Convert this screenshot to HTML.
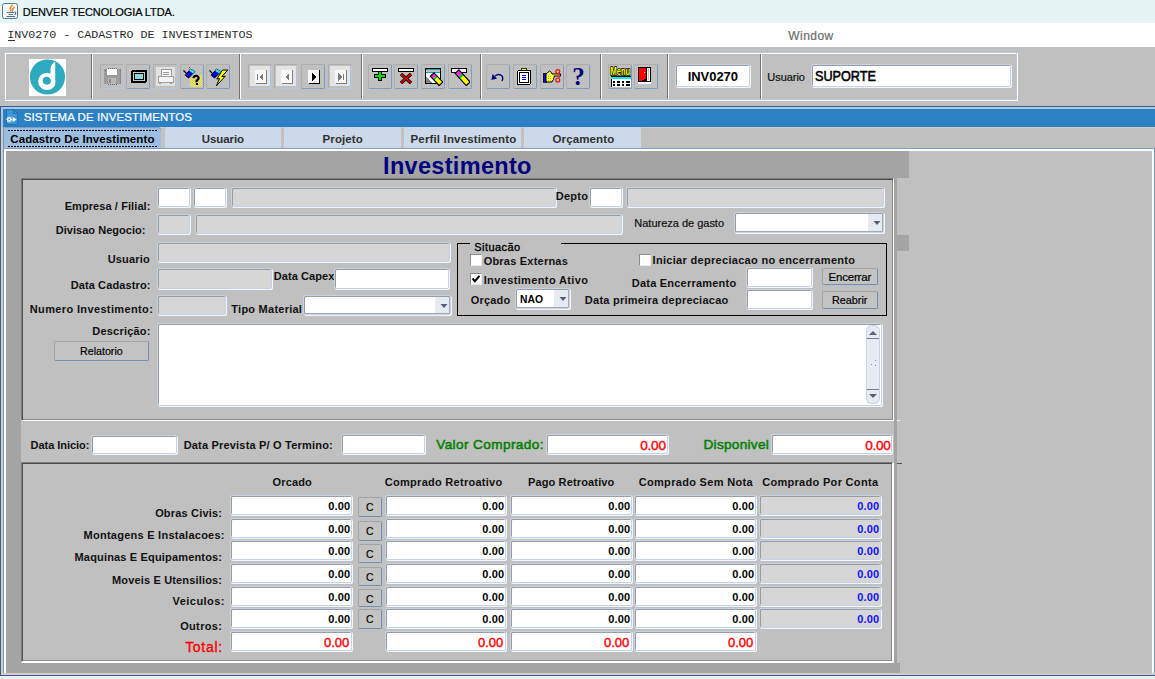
<!DOCTYPE html><html><head><meta charset="utf-8"><style>html,body{margin:0;padding:0;width:1155px;height:679px;overflow:hidden;background:#c0c0c0;}body>div,body>span,body>svg{position:absolute;display:block;}</style></head><body><div style="left:0px;top:0px;width:1155px;height:23px;background:#e6f4f6;"></div>
<svg style="left:2px;top:3px" width="16" height="16">
<rect x="0.5" y="0.5" width="15" height="15" rx="2" fill="#f7f7f7" stroke="#56758f"/>
<path d="M10.5 2 L8 5 L9 6.5 L8 8.5 M12.5 4 L10.5 6 L11 7 L9.8 8.8" stroke="#ec7a1c" stroke-width="1.2" fill="none"/>
<path d="M5 9.5 H12 M6.5 11.5 H11 M4.5 13.5 H13" stroke="#4d7394" stroke-width="1"/>
<path d="M12.5 8.8 Q15 10 12.6 11.8" stroke="#4d7394" stroke-width="1.2" fill="none"/>
</svg>
<span id="t0" style="left:22.84px;top:6.65px;font-family:'Liberation Sans';font-size:11px;line-height:11px;font-weight:normal;color:#000;letter-spacing:-0.070px;white-space:pre;-webkit-text-stroke:0.2px #000;">DENVER TECNOLOGIA LTDA.</span>
<div style="left:0px;top:23px;width:1155px;height:24px;background:#fff;"></div>
<span id="t1" style="left:7.30px;top:30.13px;font-family:'Liberation Mono';font-size:11.67px;line-height:11.67px;font-weight:normal;color:#2a2a2a;letter-spacing:0.010px;white-space:pre;">INV0270 - CADASTRO DE INVESTIMENTOS</span>
<div style="left:8px;top:40px;width:7px;height:1px;background:#333;"></div>
<span id="t2" style="left:788.28px;top:29.80px;font-family:'Liberation Sans';font-size:12px;line-height:12px;font-weight:normal;color:#6c6c6c;letter-spacing:0.443px;white-space:pre;-webkit-text-stroke:0.2px #6c6c6c;">Window</span>
<div style="left:5px;top:53px;width:1013px;height:48px;box-sizing:border-box;border:1px solid #fff;"></div>
<div style="left:4px;top:52px;width:1013px;height:48px;box-sizing:border-box;border:1px solid #b6cae2;"></div>
<div style="left:91px;top:54px;width:1px;height:45px;background:#727272;"></div>
<div style="left:92px;top:54px;width:1px;height:45px;background:#fbfbfb;"></div>
<div style="left:239px;top:54px;width:1px;height:45px;background:#727272;"></div>
<div style="left:240px;top:54px;width:1px;height:45px;background:#fbfbfb;"></div>
<div style="left:361px;top:54px;width:1px;height:45px;background:#727272;"></div>
<div style="left:362px;top:54px;width:1px;height:45px;background:#fbfbfb;"></div>
<div style="left:480px;top:54px;width:1px;height:45px;background:#727272;"></div>
<div style="left:481px;top:54px;width:1px;height:45px;background:#fbfbfb;"></div>
<div style="left:600px;top:54px;width:1px;height:45px;background:#727272;"></div>
<div style="left:601px;top:54px;width:1px;height:45px;background:#fbfbfb;"></div>
<div style="left:667px;top:54px;width:1px;height:45px;background:#727272;"></div>
<div style="left:668px;top:54px;width:1px;height:45px;background:#fbfbfb;"></div>
<div style="left:760px;top:54px;width:1px;height:45px;background:#727272;"></div>
<div style="left:761px;top:54px;width:1px;height:45px;background:#fbfbfb;"></div>
<svg style="left:29px;top:59px" width="37" height="37">
<rect width="37" height="37" fill="#fff"/>
<circle cx="18.5" cy="18" r="17.6" fill="#2eaabf"/>
<circle cx="17.8" cy="22.3" r="8.6" fill="#fff"/>
<circle cx="17.6" cy="21.6" r="3.9" fill="#2eaabf"/>
<path d="M21.5 26 L21.5 9 Q22.5 4.5 26.2 2.8 L26.2 25.5 Q25 29.5 20 30.5 Z" fill="#fff"/>
<path d="M17.6 25.5 Q21 25.8 21.8 23 L21.8 20 L17.6 21 Z" fill="#2eaabf"/>
</svg>
<div style="left:100px;top:64px;width:24px;height:25px;background:#c0c0c0;box-sizing:border-box;border-top:1px solid #adadad;border-left:1px solid #adadad;border-right:1px solid #b2c9e4;border-bottom:1px solid #b2c9e4;border-radius:2px;"></div>
<div style="left:126px;top:64px;width:24px;height:25px;background:#c0c0c0;box-sizing:border-box;border-top:1px solid #adadad;border-left:1px solid #adadad;border-right:1px solid #7d9cc4;border-bottom:1px solid #7d9cc4;border-radius:2px;"></div>
<div style="left:153px;top:64px;width:24px;height:25px;background:#c0c0c0;box-sizing:border-box;border-top:1px solid #adadad;border-left:1px solid #adadad;border-right:1px solid #b2c9e4;border-bottom:1px solid #b2c9e4;border-radius:2px;"></div>
<div style="left:180px;top:64px;width:24px;height:25px;background:#c0c0c0;box-sizing:border-box;border-top:1px solid #adadad;border-left:1px solid #adadad;border-right:1px solid #7d9cc4;border-bottom:1px solid #7d9cc4;border-radius:2px;"></div>
<div style="left:206px;top:64px;width:24px;height:25px;background:#c0c0c0;box-sizing:border-box;border-top:1px solid #adadad;border-left:1px solid #adadad;border-right:1px solid #7d9cc4;border-bottom:1px solid #7d9cc4;border-radius:2px;"></div>
<div style="left:248px;top:64px;width:24px;height:25px;background:#c0c0c0;box-sizing:border-box;border-top:1px solid #adadad;border-left:1px solid #adadad;border-right:1px solid #b2c9e4;border-bottom:1px solid #b2c9e4;border-radius:2px;"></div>
<div style="left:274px;top:64px;width:24px;height:25px;background:#c0c0c0;box-sizing:border-box;border-top:1px solid #adadad;border-left:1px solid #adadad;border-right:1px solid #b2c9e4;border-bottom:1px solid #b2c9e4;border-radius:2px;"></div>
<div style="left:301px;top:64px;width:24px;height:25px;background:#c0c0c0;box-sizing:border-box;border-top:1px solid #adadad;border-left:1px solid #adadad;border-right:1px solid #7d9cc4;border-bottom:1px solid #7d9cc4;border-radius:2px;"></div>
<div style="left:328px;top:64px;width:24px;height:25px;background:#c0c0c0;box-sizing:border-box;border-top:1px solid #adadad;border-left:1px solid #adadad;border-right:1px solid #b2c9e4;border-bottom:1px solid #b2c9e4;border-radius:2px;"></div>
<div style="left:368px;top:64px;width:24px;height:25px;background:#c0c0c0;box-sizing:border-box;border-top:1px solid #adadad;border-left:1px solid #adadad;border-right:1px solid #7d9cc4;border-bottom:1px solid #7d9cc4;border-radius:2px;"></div>
<div style="left:394px;top:64px;width:24px;height:25px;background:#c0c0c0;box-sizing:border-box;border-top:1px solid #adadad;border-left:1px solid #adadad;border-right:1px solid #7d9cc4;border-bottom:1px solid #7d9cc4;border-radius:2px;"></div>
<div style="left:421px;top:64px;width:24px;height:25px;background:#c0c0c0;box-sizing:border-box;border-top:1px solid #adadad;border-left:1px solid #adadad;border-right:1px solid #7d9cc4;border-bottom:1px solid #7d9cc4;border-radius:2px;"></div>
<div style="left:448px;top:64px;width:24px;height:25px;background:#c0c0c0;box-sizing:border-box;border-top:1px solid #adadad;border-left:1px solid #adadad;border-right:1px solid #7d9cc4;border-bottom:1px solid #7d9cc4;border-radius:2px;"></div>
<div style="left:486px;top:64px;width:24px;height:25px;background:#c0c0c0;box-sizing:border-box;border-top:1px solid #adadad;border-left:1px solid #adadad;border-right:1px solid #7d9cc4;border-bottom:1px solid #7d9cc4;border-radius:2px;"></div>
<div style="left:513px;top:64px;width:24px;height:25px;background:#c0c0c0;box-sizing:border-box;border-top:1px solid #adadad;border-left:1px solid #adadad;border-right:1px solid #7d9cc4;border-bottom:1px solid #7d9cc4;border-radius:2px;"></div>
<div style="left:540px;top:64px;width:24px;height:25px;background:#c0c0c0;box-sizing:border-box;border-top:1px solid #adadad;border-left:1px solid #adadad;border-right:1px solid #7d9cc4;border-bottom:1px solid #7d9cc4;border-radius:2px;"></div>
<div style="left:566px;top:64px;width:24px;height:25px;background:#c0c0c0;box-sizing:border-box;border-top:1px solid #adadad;border-left:1px solid #adadad;border-right:1px solid #7d9cc4;border-bottom:1px solid #7d9cc4;border-radius:2px;"></div>
<div style="left:608px;top:64px;width:24px;height:25px;background:#c0c0c0;box-sizing:border-box;border-top:1px solid #adadad;border-left:1px solid #adadad;border-right:1px solid #7d9cc4;border-bottom:1px solid #7d9cc4;border-radius:2px;"></div>
<div style="left:634px;top:64px;width:24px;height:25px;background:#c0c0c0;box-sizing:border-box;border-top:1px solid #adadad;border-left:1px solid #adadad;border-right:1px solid #7d9cc4;border-bottom:1px solid #7d9cc4;border-radius:2px;"></div>
<svg style="left:104px;top:68px" width="17" height="17" shape-rendering="crispEdges"><rect x="0" y="1" width="16" height="15" fill="#9c9c9c"/><rect x="3" y="1" width="10" height="6" fill="#fff"/><rect x="4" y="10" width="8" height="6" fill="#b8b8b8"/><rect x="5" y="11" width="2" height="4" fill="#8a8a8a"/><rect x="4" y="0" width="1" height="1" fill="#6a6a6a"/><rect x="4" y="16" width="1" height="1" fill="#6a6a6a"/><rect x="6" y="0" width="1" height="1" fill="#6a6a6a"/><rect x="6" y="16" width="1" height="1" fill="#6a6a6a"/><rect x="8" y="0" width="1" height="1" fill="#6a6a6a"/><rect x="8" y="16" width="1" height="1" fill="#6a6a6a"/><rect x="10" y="0" width="1" height="1" fill="#6a6a6a"/><rect x="10" y="16" width="1" height="1" fill="#6a6a6a"/><rect x="12" y="0" width="1" height="1" fill="#6a6a6a"/><rect x="12" y="16" width="1" height="1" fill="#6a6a6a"/><rect x="1" y="2" width="1" height="1" fill="#6a6a6a"/><rect x="16" y="1" width="1" height="15" fill="#8a8a8a"/></svg>
<svg style="left:131px;top:70px" width="16" height="13" shape-rendering="crispEdges"><rect x="0" y="0" width="16" height="13" rx="2" fill="#000"/><rect x="2" y="2" width="12" height="9" fill="#c8c8c8"/><rect x="3" y="3" width="10" height="7" fill="#000"/><rect x="4" y="4" width="8" height="5" fill="#5ff0f0"/><path d="M4 5 H12 M4 7 H12" stroke="#c0c0c0" stroke-width="1"/></svg>
<div style="left:156px;top:67px;width:19px;height:19px;background:#e2e2e2;"></div>
<svg style="left:157px;top:68px" width="17" height="17" shape-rendering="crispEdges"><rect x="4" y="1" width="10" height="7" fill="#fff" stroke="#9a9a9a" stroke-width="1"/><path d="M6 4 H12 M6 6 H12" stroke="#9a9a9a"/><rect x="1" y="8" width="15" height="6" fill="#f4f4f4" stroke="#a0a0a0" stroke-width="1"/><path d="M2 15 H4 M13 15 H15" stroke="#9a9a9a"/></svg>
<svg style="left:182px;top:67px" width="20" height="20" shape-rendering="crispEdges"><path d="M1.5 3.5 L5 7" stroke="#000" stroke-width="1.2" shape-rendering="auto"/><path d="M3.2 8.2 L8.6 2 L12.8 4.6 L6.6 11 Z" fill="#0000e8" stroke="#000" stroke-width="1" shape-rendering="auto"/><path d="M8.6 2 L12.8 4.6 L11 6.6 L7.2 3.8 Z" fill="#28f0f0" shape-rendering="auto"/><rect x="7" y="0" width="1" height="1" fill="#ff0000"/><rect x="8" y="12" width="1" height="1" fill="#ffff00"/><rect x="8" y="14" width="1" height="1" fill="#ffff00"/><rect x="8" y="16" width="1" height="1" fill="#ffff00"/><rect x="8" y="18" width="1" height="1" fill="#ffff00"/><rect x="9" y="11" width="1" height="1" fill="#ffff00"/><rect x="9" y="13" width="1" height="1" fill="#ffff00"/><rect x="9" y="15" width="1" height="1" fill="#ffff00"/><rect x="9" y="17" width="1" height="1" fill="#ffff00"/><rect x="9" y="19" width="1" height="1" fill="#ffff00"/><rect x="10" y="12" width="1" height="1" fill="#ffff00"/><rect x="10" y="14" width="1" height="1" fill="#ffff00"/><rect x="10" y="16" width="1" height="1" fill="#ffff00"/><rect x="10" y="18" width="1" height="1" fill="#ffff00"/><rect x="11" y="9" width="1" height="1" fill="#ffff00"/><rect x="11" y="11" width="1" height="1" fill="#ffff00"/><rect x="11" y="13" width="1" height="1" fill="#ffff00"/><rect x="11" y="15" width="1" height="1" fill="#ffff00"/><rect x="11" y="17" width="1" height="1" fill="#ffff00"/><rect x="11" y="19" width="1" height="1" fill="#ffff00"/><rect x="12" y="8" width="1" height="1" fill="#ffff00"/><rect x="12" y="10" width="1" height="1" fill="#ffff00"/><rect x="12" y="12" width="1" height="1" fill="#ffff00"/><rect x="12" y="14" width="1" height="1" fill="#ffff00"/><rect x="12" y="16" width="1" height="1" fill="#ffff00"/><rect x="12" y="18" width="1" height="1" fill="#ffff00"/><rect x="13" y="9" width="1" height="1" fill="#ffff00"/><rect x="13" y="11" width="1" height="1" fill="#ffff00"/><rect x="13" y="13" width="1" height="1" fill="#ffff00"/><rect x="13" y="15" width="1" height="1" fill="#ffff00"/><rect x="13" y="17" width="1" height="1" fill="#ffff00"/><rect x="13" y="19" width="1" height="1" fill="#ffff00"/><rect x="14" y="8" width="1" height="1" fill="#ffff00"/><rect x="14" y="10" width="1" height="1" fill="#ffff00"/><rect x="14" y="12" width="1" height="1" fill="#ffff00"/><rect x="14" y="14" width="1" height="1" fill="#ffff00"/><rect x="14" y="16" width="1" height="1" fill="#ffff00"/><rect x="14" y="18" width="1" height="1" fill="#ffff00"/><rect x="15" y="9" width="1" height="1" fill="#ffff00"/><rect x="15" y="11" width="1" height="1" fill="#ffff00"/><rect x="15" y="13" width="1" height="1" fill="#ffff00"/><rect x="15" y="15" width="1" height="1" fill="#ffff00"/><rect x="15" y="17" width="1" height="1" fill="#ffff00"/><rect x="15" y="19" width="1" height="1" fill="#ffff00"/><rect x="16" y="8" width="1" height="1" fill="#ffff00"/><rect x="16" y="10" width="1" height="1" fill="#ffff00"/><rect x="16" y="12" width="1" height="1" fill="#ffff00"/><rect x="16" y="14" width="1" height="1" fill="#ffff00"/><rect x="16" y="16" width="1" height="1" fill="#ffff00"/><rect x="16" y="18" width="1" height="1" fill="#ffff00"/><rect x="17" y="9" width="1" height="1" fill="#ffff00"/><rect x="17" y="11" width="1" height="1" fill="#ffff00"/><rect x="17" y="13" width="1" height="1" fill="#ffff00"/><rect x="17" y="15" width="1" height="1" fill="#ffff00"/><rect x="17" y="17" width="1" height="1" fill="#ffff00"/><rect x="17" y="19" width="1" height="1" fill="#ffff00"/><rect x="18" y="8" width="1" height="1" fill="#ffff00"/><rect x="18" y="10" width="1" height="1" fill="#ffff00"/><rect x="18" y="12" width="1" height="1" fill="#ffff00"/><rect x="18" y="14" width="1" height="1" fill="#ffff00"/><rect x="18" y="16" width="1" height="1" fill="#ffff00"/><rect x="18" y="18" width="1" height="1" fill="#ffff00"/><rect x="19" y="9" width="1" height="1" fill="#ffff00"/><rect x="19" y="11" width="1" height="1" fill="#ffff00"/><rect x="19" y="13" width="1" height="1" fill="#ffff00"/><rect x="19" y="15" width="1" height="1" fill="#ffff00"/><rect x="19" y="17" width="1" height="1" fill="#ffff00"/><rect x="19" y="19" width="1" height="1" fill="#ffff00"/><path d="M11.5 11.2 Q11.8 8.8 14 8.8 Q16.6 8.8 16.6 11.2 Q16.6 12.8 14.6 13.6 L14.6 15.2" stroke="#000" stroke-width="2.2" fill="none" shape-rendering="auto"/><rect x="13.5" y="16" width="2.2" height="2.2" fill="#000"/></svg>
<svg style="left:208px;top:67px" width="20" height="20" shape-rendering="crispEdges"><path d="M1.5 3.5 L5 7" stroke="#000" stroke-width="1.2" shape-rendering="auto"/><path d="M3.2 8.2 L8.6 2 L12.8 4.6 L6.6 11 Z" fill="#0000e8" stroke="#000" stroke-width="1" shape-rendering="auto"/><path d="M8.6 2 L12.8 4.6 L11 6.6 L7.2 3.8 Z" fill="#28f0f0" shape-rendering="auto"/><path d="M14.5 3 L19.8 3 L13.8 9.6 L17.2 9.2 L8.3 19 L11.6 11.6 L8.8 12 Z" fill="#ffff00" stroke="#000" stroke-width="1" stroke-linejoin="round" shape-rendering="auto"/></svg>
<div style="left:250px;top:66px;width:20px;height:20px;background:#e4e4e4;"></div>
<svg style="left:255px;top:70px" width="13" height="15" shape-rendering="crispEdges"><rect x="0" y="0" width="11" height="13" fill="#f8f8f8"/><rect x="11" y="0" width="1" height="14" fill="#808080"/><rect x="1" y="13" width="11" height="1" fill="#808080"/><rect x="2" y="4" width="1" height="6" fill="#7a7a7a"/><path d="M8 3 L8 11 L4 7 Z" fill="#7a7a7a"/></svg>
<div style="left:276px;top:66px;width:20px;height:20px;background:#e4e4e4;"></div>
<svg style="left:281px;top:70px" width="13" height="15" shape-rendering="crispEdges"><rect x="0" y="0" width="11" height="13" fill="#f8f8f8"/><rect x="11" y="0" width="1" height="14" fill="#808080"/><rect x="1" y="13" width="11" height="1" fill="#808080"/><path d="M8 3 L8 11 L4 7 Z" fill="#7a7a7a"/></svg>
<svg style="left:308px;top:70px" width="13" height="15" shape-rendering="crispEdges"><rect x="0" y="0" width="11" height="13" fill="#f8f8f8"/><rect x="11" y="0" width="1" height="14" fill="#000"/><rect x="1" y="13" width="11" height="1" fill="#000"/><path d="M4 3 L4 11 L8 7 Z" fill="#000"/></svg>
<div style="left:330px;top:66px;width:20px;height:20px;background:#e4e4e4;"></div>
<svg style="left:335px;top:70px" width="13" height="15" shape-rendering="crispEdges"><rect x="0" y="0" width="11" height="13" fill="#f8f8f8"/><rect x="11" y="0" width="1" height="14" fill="#808080"/><rect x="1" y="13" width="11" height="1" fill="#808080"/><path d="M3 3 L3 11 L7 7 Z" fill="#7a7a7a"/><rect x="8" y="4" width="1" height="6" fill="#7a7a7a"/></svg>
<svg style="left:372px;top:68px" width="17" height="16" shape-rendering="crispEdges"><rect x="0" y="0" width="16" height="4" fill="#000"/><rect x="1" y="1" width="14" height="2" fill="#fff"/><path d="M6 3 H10 V6 H14 V10 H10 V13 H6 V10 H2 V6 H6 Z" fill="#000"/><path d="M7 4 H9 V7 H13 V9 H9 V12 H7 V9 H3 V7 H7 Z" fill="#00e000"/></svg>
<svg style="left:398px;top:68px" width="17" height="16" shape-rendering="crispEdges"><rect x="0" y="0" width="16" height="4" fill="#000"/><rect x="1" y="1" width="14" height="2" fill="#fff"/><path d="M3 6 L13 15 M13 6 L3 15" stroke="#000" stroke-width="3.5" shape-rendering="auto"/><path d="M3 6 L13 15 M13 6 L3 15" stroke="#c00000" stroke-width="2.2" shape-rendering="auto"/></svg>
<svg style="left:424px;top:68px" width="19" height="18" shape-rendering="crispEdges"><rect x="1" y="0" width="16" height="16" fill="#000"/><rect x="2" y="1" width="14" height="1" fill="#00a8a8"/><rect x="2" y="2" width="14" height="2" fill="#c0c0c0"/><rect x="2" y="4" width="14" height="1" fill="#00a8a8"/><rect x="2" y="5" width="14" height="10" fill="#fff"/><path d="M2 15 L2 8 L8 15 Z" fill="#808080"/><path d="M10.01 4.87 L12.65 7.63 L9.03 11.09 L6.39 8.33 Z" fill="#ff20ff" shape-rendering="auto"/><path d="M12.65 7.63 L13.97 9.01 L10.35 12.47 L9.03 11.09 Z" fill="#00d000" shape-rendering="auto"/><path d="M13.97 9.01 L18.81 14.07 L15.19 17.53 L10.35 12.47 Z" fill="#ffff00" shape-rendering="auto"/><path d="M10.01 4.87 L18.81 14.07 L15.19 17.53 L6.39 8.33 Z" fill="none" stroke="#000" stroke-width="1.2" shape-rendering="auto"/></svg>
<svg style="left:451px;top:68px" width="19" height="18" shape-rendering="crispEdges"><rect x="0" y="0" width="16" height="5" fill="#000"/><rect x="1" y="1" width="14" height="3" fill="#fff"/><path d="M7.92 1.84 L11.28 5.50 L7.44 9.02 L4.08 5.36 Z" fill="#ff20ff" shape-rendering="auto"/><path d="M11.28 5.50 L12.96 7.33 L9.12 10.85 L7.44 9.02 Z" fill="#00d000" shape-rendering="auto"/><path d="M12.96 7.33 L19.12 14.04 L15.28 17.56 L9.12 10.85 Z" fill="#ffff00" shape-rendering="auto"/><path d="M7.92 1.84 L19.12 14.04 L15.28 17.56 L4.08 5.36 Z" fill="none" stroke="#000" stroke-width="1.2" shape-rendering="auto"/></svg>
<svg style="left:491px;top:73px" width="14" height="10" shape-rendering="crispEdges"><path d="M4 3 Q8 0 11 3 Q12.5 5 11 8" stroke="#000080" stroke-width="1.4" fill="none" shape-rendering="auto"/><path d="M0.5 7 L1.5 1 L6 5.5 Z" fill="#000080" shape-rendering="auto"/></svg>
<svg style="left:517px;top:68px" width="15" height="17" shape-rendering="crispEdges"><rect x="0" y="2" width="14" height="15" rx="2" fill="#000"/><rect x="1" y="3" width="12" height="13" fill="#fff"/><rect x="2" y="4" width="10" height="11" fill="#000"/><rect x="3" y="5" width="8" height="9" fill="#fff"/><path d="M4 2 H10 L9 0 H5 Z" fill="#ffff00" stroke="#000" stroke-width="0.8"/><path d="M5 7 H9 M5 9 H9 M5 11 H9" stroke="#0000e0"/></svg>
<svg style="left:543px;top:69px" width="19" height="15" shape-rendering="crispEdges"><rect x="0" y="4" width="3" height="9" fill="#0000e8" stroke="#000" stroke-width="0.8"/><path d="M3 5 L6.5 2 L8.5 3.5 L9 5 H17.5 V7 H11 L11.5 8 L10.5 9.2 L10.8 10.6 L9.5 11.6 L9 13 H4 L3 12 Z" fill="#ffff50" stroke="#000" stroke-width="1" shape-rendering="auto"/><path d="M5 7 H9 M5 9 H9 M5 11 H8" stroke="#b8b800" stroke-width="0.8" stroke-dasharray="1 1"/><circle cx="14.8" cy="2.6" r="2" fill="none" stroke="#ff0000" stroke-width="1.1" shape-rendering="auto"/><circle cx="14.8" cy="11" r="2" fill="none" stroke="#ff0000" stroke-width="1.1" shape-rendering="auto"/><path d="M15.5 4.5 L17.5 6.5 M15.5 9 L17.5 7" stroke="#ff0000" stroke-width="1" shape-rendering="auto"/></svg>
<div style="left:566px;top:63.5px;width:25px;height:24px;font-family:'Liberation Serif';font-weight:bold;font-size:25px;line-height:26px;color:#000080;text-align:center">?</div>
<svg style="left:610px;top:66px" width="21" height="22" shape-rendering="crispEdges"><text x="0.6" y="9" font-family="Liberation Sans" font-weight="bold" font-size="10" textLength="19.5" lengthAdjust="spacingAndGlyphs" fill="#ffff00" stroke="#000" stroke-width="1.6" paint-order="stroke" shape-rendering="auto">Menu</text><rect x="1" y="10" width="20" height="1" fill="#000"/><rect x="1" y="11" width="20" height="2" fill="#00e8e8"/><rect x="1" y="13" width="20" height="8" fill="#fff"/><rect x="1" y="13" width="1" height="8" fill="#000"/><path d="M3 15.5 H5 M7 15.5 H10 M12 15.5 H14 M16 15.5 H20 M3 18.5 H5 M7 18.5 H10 M12 18.5 H14 M16 18.5 H20" stroke="#000" stroke-width="2"/></svg>
<svg style="left:638px;top:67px" width="15" height="17" shape-rendering="crispEdges"><rect x="0" y="0" width="13" height="15" fill="#000"/><rect x="9" y="1" width="3" height="13" fill="#fff"/><rect x="10" y="1" width="1" height="12" fill="#c0c0c0"/><path d="M1 1 H8 V12 H6 V13 H4 V14 H1 Z" fill="#ff0000"/><rect x="6" y="5" width="1" height="1" fill="#ffff00"/><rect x="0" y="15" width="13" height="2" fill="#fff"/></svg>
<div style="left:675px;top:64px;width:75px;height:23px;background:#fff;box-sizing:border-box;border:1px solid #c3d4ea;border-radius:2px;box-shadow:inset 1px 1px 0 #9c9c9c,1px 1px 0 #f2f5fa;"></div>
<span id="t3" style="left:687.72px;top:69.95px;font-family:'Liberation Sans';font-size:13px;line-height:13px;font-weight:bold;color:#000;letter-spacing:-0.049px;white-space:pre;">INV0270</span>
<span id="t4" style="left:767.34px;top:71.65px;font-family:'Liberation Sans';font-size:11px;line-height:11px;font-weight:normal;color:#111;letter-spacing:-0.051px;white-space:pre;-webkit-text-stroke:0.2px #111;">Usuario</span>
<div style="left:811px;top:64px;width:200px;height:23px;background:#fff;box-sizing:border-box;border:1px solid #c3d4ea;border-radius:2px;box-shadow:inset 1px 1px 0 #9c9c9c,1px 1px 0 #f2f5fa;"></div>
<span id="t5" style="left:814.65px;top:68.93px;font-family:'Liberation Sans';font-size:14.2px;line-height:14.2px;font-weight:normal;color:#000;letter-spacing:0.000px;white-space:pre;-webkit-text-stroke:0.55px #000;transform:scaleX(0.8916);transform-origin:0 0;">SUPORTE</span>
<div style="left:0px;top:106px;width:1155px;height:1px;background:#3d5d8c;"></div>
<div style="left:0px;top:106px;width:1px;height:570px;background:#3d5d8c;"></div>
<div style="left:1px;top:107px;width:1154px;height:2px;background:#a9c8e6;"></div>
<div style="left:1px;top:107px;width:2px;height:20px;background:#a9c8e6;"></div>
<div style="left:3px;top:109px;width:1152px;height:18px;background:#2b81c4;"></div>
<div style="left:3px;top:126px;width:1152px;height:1px;background:#247cc6;"></div>
<div style="left:641px;top:127px;width:514px;height:1px;background:#d3cec6;"></div>
<svg style="left:6px;top:109px" width="12" height="16">
<path d="M0.5 0.5 H7.5 L11.5 4.5 V15.5 H0.5 Z" fill="#3d96da" stroke="#226fb0"/>
<path d="M7.5 0.5 V4.5 H11.5" fill="none" stroke="#226fb0"/>
<circle cx="3.2" cy="10.5" r="1.9" fill="#fff"/><rect x="4.90" y="9.90" width="1.2" height="1.2" fill="#fff"/><rect x="4.23" y="11.53" width="1.2" height="1.2" fill="#fff"/><rect x="2.60" y="12.20" width="1.2" height="1.2" fill="#fff"/><rect x="0.97" y="11.53" width="1.2" height="1.2" fill="#fff"/><rect x="0.30" y="9.90" width="1.2" height="1.2" fill="#fff"/><rect x="0.97" y="8.27" width="1.2" height="1.2" fill="#fff"/><rect x="2.60" y="7.60" width="1.2" height="1.2" fill="#fff"/><rect x="4.23" y="8.27" width="1.2" height="1.2" fill="#fff"/><circle cx="3.2" cy="10.5" r="0.9" fill="#3d96da"/>
<path d="M6.6 8 L6.6 13 L10.6 10.5 Z" fill="#fff"/>
</svg>
<span id="t6" style="left:23.81px;top:112.22px;font-family:'Liberation Sans';font-size:11.5px;line-height:11.5px;font-weight:normal;color:#fff;letter-spacing:0.096px;white-space:pre;-webkit-text-stroke:0.2px #fff;">SISTEMA DE INVESTIMENTOS</span>
<div style="left:1px;top:127px;width:2px;height:548px;background:#d2cec6;"></div>
<div style="left:3px;top:127px;width:1px;height:548px;background:#7592b8;"></div>
<div style="left:1px;top:673px;width:1154px;height:2px;background:#d2cec6;"></div>
<div style="left:0px;top:675px;width:1155px;height:1px;background:#3d5d8c;"></div>
<div style="left:0px;top:676px;width:1155px;height:3px;background:#e9eef6;"></div>
<div style="left:4px;top:127px;width:159px;height:21px;background:#9dbee0;box-sizing:border-box;border-top:1px solid #7f9fc4;border-top-right-radius:7px 5px;border-top-left-radius:2px;"></div>
<div style="left:165px;top:127px;width:117px;height:21px;background:#ccd9ea;border-top-right-radius:3px;border-top-left-radius:3px;"></div>
<div style="left:284px;top:127px;width:118px;height:21px;background:#ccd9ea;border-top-right-radius:3px;border-top-left-radius:3px;"></div>
<div style="left:404px;top:127px;width:118px;height:21px;background:#ccd9ea;border-top-right-radius:3px;border-top-left-radius:3px;"></div>
<div style="left:524px;top:127px;width:117px;height:21px;background:#ccd9ea;border-top-right-radius:3px;border-top-left-radius:3px;"></div>
<div style="left:161px;top:127px;width:3px;height:21px;background:#c4c2bf;"></div>
<div style="left:160px;top:127px;width:5px;height:1px;background:#d2ccc2;"></div>
<div style="left:281px;top:127px;width:3px;height:21px;background:#c4c2bf;"></div>
<div style="left:280px;top:127px;width:5px;height:1px;background:#d2ccc2;"></div>
<div style="left:401px;top:127px;width:3px;height:21px;background:#c4c2bf;"></div>
<div style="left:400px;top:127px;width:5px;height:1px;background:#d2ccc2;"></div>
<div style="left:521px;top:127px;width:3px;height:21px;background:#c4c2bf;"></div>
<div style="left:520px;top:127px;width:5px;height:1px;background:#d2ccc2;"></div>
<svg style="left:8px;top:130px" width="150" height="1" shape-rendering="crispEdges"><line x1="0" y1="0.5" x2="150" y2="0.5" stroke="#000" stroke-dasharray="2 1"/></svg>
<svg style="left:8px;top:146px" width="150" height="1" shape-rendering="crispEdges"><line x1="0" y1="0.5" x2="150" y2="0.5" stroke="#000" stroke-dasharray="2 1"/></svg>
<span id="t7" style="left:10.31px;top:134.22px;font-family:'Liberation Sans';font-size:11.5px;line-height:11.5px;font-weight:bold;color:#000;letter-spacing:0.099px;white-space:pre;">Cadastro De Investimento</span>
<span id="t8" style="left:201.66px;top:134.22px;font-family:'Liberation Sans';font-size:11.5px;line-height:11.5px;font-weight:bold;color:#303030;letter-spacing:-0.063px;white-space:pre;">Usuario</span>
<span id="t9" style="left:322.51px;top:134.22px;font-family:'Liberation Sans';font-size:11.5px;line-height:11.5px;font-weight:bold;color:#303030;letter-spacing:0.121px;white-space:pre;">Projeto</span>
<span id="t10" style="left:410.51px;top:134.22px;font-family:'Liberation Sans';font-size:11.5px;line-height:11.5px;font-weight:bold;color:#303030;letter-spacing:0.159px;white-space:pre;">Perfil Investimento</span>
<span id="t11" style="left:552.51px;top:134.22px;font-family:'Liberation Sans';font-size:11.5px;line-height:11.5px;font-weight:bold;color:#303030;letter-spacing:0.129px;white-space:pre;">Orçamento</span>
<div style="left:3px;top:148px;width:1152px;height:1px;background:#7f9ec6;"></div>
<div style="left:4px;top:149px;width:1150px;height:2px;background:#fff;"></div>
<div style="left:4px;top:149px;width:2px;height:524px;background:#fff;"></div>
<div style="left:1152px;top:149px;width:2px;height:524px;background:#fff;"></div>
<div style="left:1154px;top:148px;width:1px;height:525px;background:#7592b8;"></div>
<div style="left:6px;top:151px;width:1146px;height:522px;background:#c0c0c0;"></div>
<div style="left:6px;top:151px;width:903px;height:27px;background:#a4a4a4;"></div>
<div style="left:6px;top:178px;width:15px;height:495px;background:#a4a4a4;"></div>
<div style="left:6px;top:663px;width:894px;height:10px;background:#a4a4a4;"></div>
<div style="left:894px;top:178px;width:3px;height:485px;background:#a4a4a4;"></div>
<div style="left:897px;top:235px;width:12px;height:16px;background:#a4a4a4;"></div>
<span id="t12" style="left:383.09px;top:155.03px;font-family:'Liberation Sans';font-size:23.5px;line-height:23.5px;font-weight:bold;color:#000080;letter-spacing:0.309px;white-space:pre;">Investimento</span>
<div style="left:21px;top:178px;width:873px;height:243px;background:#c0c0c0;box-sizing:border-box;border-top:1px solid #7c7c7c;border-left:1px solid #7c7c7c;border-right:1px solid #fff;border-bottom:1px solid #fff;box-shadow:inset 1px 1px 0 #4e4e4e,inset -1px -1px 0 #8a8a8a;"></div>
<div style="left:21px;top:462px;width:873px;height:201px;background:#c0c0c0;box-sizing:border-box;border-top:1px solid #7c7c7c;border-left:1px solid #7c7c7c;border-right:2px solid #fff;border-bottom:2px solid #fff;box-shadow:inset 1px 1px 0 #4e4e4e,inset -1px -1px 0 #8a8a8a;"></div>
<div style="left:897px;top:420px;width:3px;height:1px;background:#f4f4f4;"></div>
<div style="left:897px;top:463px;width:5px;height:1px;background:#505050;"></div>
<div style="left:157px;top:187px;width:33px;height:20px;background:#fff;box-sizing:border-box;border:1px solid #c3d4ea;border-radius:2px;box-shadow:inset 1px 1px 0 #9c9c9c,1px 1px 0 #f2f5fa;"></div>
<div style="left:193px;top:187px;width:33px;height:20px;background:#fff;box-sizing:border-box;border:1px solid #c3d4ea;border-radius:2px;box-shadow:inset 1px 1px 0 #9c9c9c,1px 1px 0 #f2f5fa;"></div>
<div style="left:231px;top:187px;width:325px;height:20px;background:#d6d6d6;box-sizing:border-box;border:1px solid #c3d4ea;border-radius:2px;box-shadow:inset 1px 1px 0 #9c9c9c,1px 1px 0 #f2f5fa;"></div>
<span id="t13" style="left:64.64px;top:200.65px;font-family:'Liberation Sans';font-size:11px;line-height:11px;font-weight:bold;color:#111;letter-spacing:0.089px;white-space:pre;">Empresa / Filial:</span>
<span id="t14" style="left:555.84px;top:191.15px;font-family:'Liberation Sans';font-size:11px;line-height:11px;font-weight:bold;color:#111;letter-spacing:0.232px;white-space:pre;">Depto</span>
<div style="left:589px;top:187px;width:33px;height:20px;background:#fff;box-sizing:border-box;border:1px solid #c3d4ea;border-radius:2px;box-shadow:inset 1px 1px 0 #9c9c9c,1px 1px 0 #f2f5fa;"></div>
<div style="left:626px;top:187px;width:258px;height:20px;background:#d6d6d6;box-sizing:border-box;border:1px solid #c3d4ea;border-radius:2px;box-shadow:inset 1px 1px 0 #9c9c9c,1px 1px 0 #f2f5fa;"></div>
<span id="t15" style="left:55.74px;top:224.65px;font-family:'Liberation Sans';font-size:11px;line-height:11px;font-weight:bold;color:#111;letter-spacing:0.030px;white-space:pre;">Divisao Negocio:</span>
<div style="left:157px;top:214px;width:33px;height:20px;background:#d6d6d6;box-sizing:border-box;border:1px solid #c3d4ea;border-radius:2px;box-shadow:inset 1px 1px 0 #9c9c9c,1px 1px 0 #f2f5fa;"></div>
<div style="left:195px;top:214px;width:427px;height:20px;background:#d6d6d6;box-sizing:border-box;border:1px solid #c3d4ea;border-radius:2px;box-shadow:inset 1px 1px 0 #9c9c9c,1px 1px 0 #f2f5fa;"></div>
<span id="t16" style="left:634.34px;top:217.65px;font-family:'Liberation Sans';font-size:11px;line-height:11px;font-weight:normal;color:#111;letter-spacing:-0.012px;white-space:pre;-webkit-text-stroke:0.2px #111;">Natureza de gasto</span>
<div style="left:734px;top:212px;width:150px;height:21px;background:#fff;box-sizing:border-box;border:1px solid #c3d4ea;border-radius:2px;box-shadow:inset 1px 1px 0 #9c9c9c,inset -1px -1px 0 #a8a8a8,1px 1px 0 #f2f5fa;"></div>
<div style="left:868px;top:214px;width:14px;height:17px;background:#e6eaf3;"></div>
<svg style="left:871.5px;top:220.0px" width="10" height="6"><path d="M1.5 1 L8.5 1 L5 5 Z" fill="#5b5b78"/></svg>
<span id="t17" style="left:107.64px;top:253.65px;font-family:'Liberation Sans';font-size:11px;line-height:11px;font-weight:bold;color:#111;letter-spacing:0.189px;white-space:pre;">Usuario</span>
<div style="left:157px;top:242px;width:293px;height:20px;background:#d6d6d6;box-sizing:border-box;border:1px solid #c3d4ea;border-radius:2px;box-shadow:inset 1px 1px 0 #9c9c9c,1px 1px 0 #f2f5fa;"></div>
<span id="t18" style="left:70.64px;top:279.65px;font-family:'Liberation Sans';font-size:11px;line-height:11px;font-weight:bold;color:#111;letter-spacing:0.119px;white-space:pre;">Data Cadastro:</span>
<div style="left:157px;top:268px;width:115px;height:21px;background:#d6d6d6;box-sizing:border-box;border:1px solid #c3d4ea;border-radius:2px;box-shadow:inset 1px 1px 0 #9c9c9c,1px 1px 0 #f2f5fa;"></div>
<span id="t19" style="left:273.74px;top:271.15px;font-family:'Liberation Sans';font-size:11px;line-height:11px;font-weight:bold;color:#111;letter-spacing:0.075px;white-space:pre;">Data Capex</span>
<div style="left:334px;top:268px;width:115px;height:21px;background:#fff;box-sizing:border-box;border:1px solid #c3d4ea;border-radius:2px;box-shadow:inset 1px 1px 0 #9c9c9c,1px 1px 0 #f2f5fa;"></div>
<span id="t20" style="left:29.74px;top:304.15px;font-family:'Liberation Sans';font-size:11px;line-height:11px;font-weight:bold;color:#111;letter-spacing:0.366px;white-space:pre;">Numero Investimento:</span>
<div style="left:157px;top:295px;width:69px;height:20px;background:#d6d6d6;box-sizing:border-box;border:1px solid #c3d4ea;border-radius:2px;box-shadow:inset 1px 1px 0 #9c9c9c,1px 1px 0 #f2f5fa;"></div>
<span id="t21" style="left:231.34px;top:303.65px;font-family:'Liberation Sans';font-size:11px;line-height:11px;font-weight:bold;color:#111;letter-spacing:0.245px;white-space:pre;">Tipo Material</span>
<div style="left:303px;top:295px;width:148px;height:20px;background:#fff;box-sizing:border-box;border:1px solid #c3d4ea;border-radius:2px;box-shadow:inset 1px 1px 0 #9c9c9c,inset -1px -1px 0 #a8a8a8,1px 1px 0 #f2f5fa;"></div>
<div style="left:435px;top:297px;width:14px;height:16px;background:#e6eaf3;"></div>
<svg style="left:438.5px;top:302.5px" width="10" height="6"><path d="M1.5 1 L8.5 1 L5 5 Z" fill="#5b5b78"/></svg>
<div style="left:457px;top:243px;width:1px;height:73px;background:#000;"></div>
<div style="left:457px;top:315px;width:430px;height:1px;background:#000;"></div>
<div style="left:886px;top:243px;width:1px;height:73px;background:#000;"></div>
<div style="left:457px;top:243px;width:13px;height:1px;background:#000;"></div>
<div style="left:561px;top:243px;width:326px;height:1px;background:#000;"></div>
<span id="t22" style="left:474.34px;top:241.65px;font-family:'Liberation Sans';font-size:11px;line-height:11px;font-weight:normal;color:#000;letter-spacing:0.413px;white-space:pre;-webkit-text-stroke:0.35px #000;">Situacão</span>
<div style="left:470px;top:254px;width:12px;height:12px;background:#fff;box-sizing:border-box;border-top:1px solid #8c8c8c;border-left:1px solid #8c8c8c;border-right:1px solid #e6eaf0;border-bottom:1px solid #e6eaf0;"></div>
<span id="t23" style="left:483.64px;top:255.65px;font-family:'Liberation Sans';font-size:11px;line-height:11px;font-weight:bold;color:#111;letter-spacing:0.221px;white-space:pre;">Obras Externas</span>
<div style="left:470px;top:273px;width:12px;height:12px;background:#fff;box-sizing:border-box;border-top:1px solid #8c8c8c;border-left:1px solid #8c8c8c;border-right:1px solid #e6eaf0;border-bottom:1px solid #e6eaf0;"></div>
<svg style="left:470px;top:273px" width="12" height="12"><path d="M2.5 5.5 L4.8 8.2 L9.5 2.8" stroke="#000" stroke-width="2" fill="none"/></svg>
<span id="t24" style="left:483.64px;top:274.65px;font-family:'Liberation Sans';font-size:11px;line-height:11px;font-weight:bold;color:#111;letter-spacing:0.376px;white-space:pre;">Investimento Ativo</span>
<span id="t25" style="left:470.74px;top:294.65px;font-family:'Liberation Sans';font-size:11px;line-height:11px;font-weight:bold;color:#111;letter-spacing:0.197px;white-space:pre;">Orçado</span>
<div style="left:515px;top:288px;width:55px;height:21px;background:#fff;box-sizing:border-box;border:1px solid #c3d4ea;border-radius:2px;box-shadow:inset 1px 1px 0 #9c9c9c,inset -1px -1px 0 #a8a8a8,1px 1px 0 #f2f5fa;"></div>
<div style="left:554px;top:290px;width:14px;height:17px;background:#e6eaf3;"></div>
<svg style="left:557.5px;top:296.0px" width="10" height="6"><path d="M1.5 1 L8.5 1 L5 5 Z" fill="#5b5b78"/></svg>
<span id="t26" style="left:520.04px;top:293.65px;font-family:'Liberation Sans';font-size:11px;line-height:11px;font-weight:bold;color:#000;letter-spacing:0.000px;white-space:pre;transform:scaleX(0.9365);transform-origin:0 0;">NAO</span>
<div style="left:639px;top:254px;width:12px;height:12px;background:#fff;box-sizing:border-box;border-top:1px solid #8c8c8c;border-left:1px solid #8c8c8c;border-right:1px solid #e6eaf0;border-bottom:1px solid #e6eaf0;"></div>
<span id="t27" style="left:652.54px;top:255.15px;font-family:'Liberation Sans';font-size:11px;line-height:11px;font-weight:bold;color:#111;letter-spacing:0.310px;white-space:pre;">Iniciar depreciacao no encerramento</span>
<span id="t28" style="left:631.84px;top:277.95px;font-family:'Liberation Sans';font-size:11px;line-height:11px;font-weight:bold;color:#111;letter-spacing:0.214px;white-space:pre;">Data Encerramento</span>
<span id="t29" style="left:584.84px;top:294.65px;font-family:'Liberation Sans';font-size:11px;line-height:11px;font-weight:bold;color:#111;letter-spacing:0.243px;white-space:pre;">Data primeira depreciacao</span>
<div style="left:746px;top:267px;width:66px;height:20px;background:#fff;box-sizing:border-box;border:1px solid #c3d4ea;border-radius:2px;box-shadow:inset 1px 1px 0 #9c9c9c,1px 1px 0 #f2f5fa;"></div>
<div style="left:746px;top:289px;width:66px;height:20px;background:#fff;box-sizing:border-box;border:1px solid #c3d4ea;border-radius:2px;box-shadow:inset 1px 1px 0 #9c9c9c,1px 1px 0 #f2f5fa;"></div>
<div style="left:822px;top:268px;width:56px;height:17px;background:#c3c3c3;box-sizing:border-box;border-top:1px solid #a4a4a4;border-left:1px solid #a4a4a4;border-right:1px solid #6d8fba;border-bottom:1px solid #6d8fba;border-radius:2px;"></div>
<span id="t30" style="left:828.51px;top:272.23px;font-family:'Liberation Sans';font-size:11.5px;line-height:11.5px;font-weight:normal;color:#000;letter-spacing:-0.194px;white-space:pre;-webkit-text-stroke:0.2px #000;">Encerrar</span>
<div style="left:822px;top:291px;width:56px;height:18px;background:#c3c3c3;box-sizing:border-box;border-top:1px solid #a4a4a4;border-left:1px solid #a4a4a4;border-right:1px solid #6d8fba;border-bottom:1px solid #6d8fba;border-radius:2px;"></div>
<span id="t31" style="left:832.11px;top:295.23px;font-family:'Liberation Sans';font-size:11.5px;line-height:11.5px;font-weight:normal;color:#000;letter-spacing:0.000px;white-space:pre;-webkit-text-stroke:0.2px #000;transform:scaleX(0.9399);transform-origin:0 0;">Reabrir</span>
<span id="t32" style="left:92.34px;top:326.15px;font-family:'Liberation Sans';font-size:11px;line-height:11px;font-weight:bold;color:#111;letter-spacing:0.204px;white-space:pre;">Descrição:</span>
<div style="left:54px;top:341px;width:95px;height:20px;background:#c3c3c3;box-sizing:border-box;border-top:1px solid #a4a4a4;border-left:1px solid #a4a4a4;border-right:1px solid #6d8fba;border-bottom:1px solid #6d8fba;border-radius:2px;"></div>
<span id="t33" style="left:79.61px;top:345.73px;font-family:'Liberation Sans';font-size:11.5px;line-height:11.5px;font-weight:normal;color:#000;letter-spacing:0.000px;white-space:pre;-webkit-text-stroke:0.2px #000;transform:scaleX(0.9287);transform-origin:0 0;">Relatorio</span>
<div style="left:157px;top:323px;width:725px;height:83px;background:#fff;box-sizing:border-box;border:1px solid #c3d4ea;border-radius:2px;box-shadow:inset 1px 1px 0 #9c9c9c,1px 1px 0 #f2f5fa;"></div>
<div style="left:866px;top:325px;width:14px;height:79px;background:#e7ebf4;border-radius:6px;box-shadow:inset 0 0 0 1px #c8d4e6;"></div>
<svg style="left:866px;top:325px" width="14" height="79" shape-rendering="crispEdges"><path d="M3 10 L11 10 L7 6 Z" fill="#5e5e7c" shape-rendering="auto"/><rect x="1" y="13" width="12" height="1" fill="#6f7f98"/><rect x="1" y="64" width="12" height="1" fill="#6f7f98"/><path d="M3 69 L11 69 L7 73 Z" fill="#5e5e7c" shape-rendering="auto"/><path d="M9 36 L10 35 M5 40 L6 39 M9 41 L10 40" stroke="#7c8cb0"/></svg>
<span id="t34" style="left:30.54px;top:439.95px;font-family:'Liberation Sans';font-size:11px;line-height:11px;font-weight:bold;color:#111;letter-spacing:-0.036px;white-space:pre;">Data Inicio:</span>
<div style="left:91px;top:435px;width:86px;height:19px;background:#fff;box-sizing:border-box;border:1px solid #c3d4ea;border-radius:2px;box-shadow:inset 1px 1px 0 #9c9c9c,1px 1px 0 #f2f5fa;"></div>
<span id="t35" style="left:183.64px;top:439.95px;font-family:'Liberation Sans';font-size:11px;line-height:11px;font-weight:bold;color:#111;letter-spacing:0.193px;white-space:pre;">Data Prevista P/ O Termino:</span>
<div style="left:341px;top:434px;width:84px;height:20px;background:#fff;box-sizing:border-box;border:1px solid #c3d4ea;border-radius:2px;box-shadow:inset 1px 1px 0 #9c9c9c,1px 1px 0 #f2f5fa;"></div>
<span id="t36" style="left:436.18px;top:438.44px;font-family:'Liberation Sans';font-size:13.6px;line-height:13.6px;font-weight:normal;color:#008000;letter-spacing:0.401px;white-space:pre;-webkit-text-stroke:0.5px #008000;">Valor Comprado:</span>
<div style="left:546px;top:434px;width:122px;height:20px;background:#fff;box-sizing:border-box;border:1px solid #c3d4ea;border-radius:2px;box-shadow:inset 1px 1px 0 #9c9c9c,1px 1px 0 #f2f5fa;"></div>
<span id="t37" style="left:640.29px;top:438.52px;font-family:'Liberation Sans';font-size:13.5px;line-height:13.5px;font-weight:normal;color:#ff0000;letter-spacing:-0.210px;white-space:pre;-webkit-text-stroke:0.4px #ff0000;">0.00</span>
<span id="t38" style="left:703.48px;top:438.44px;font-family:'Liberation Sans';font-size:13.6px;line-height:13.6px;font-weight:normal;color:#008000;letter-spacing:0.293px;white-space:pre;-webkit-text-stroke:0.5px #008000;">Disponivel</span>
<div style="left:771px;top:434px;width:121px;height:20px;background:#fff;box-sizing:border-box;border:1px solid #c3d4ea;border-radius:2px;box-shadow:inset 1px 1px 0 #9c9c9c,1px 1px 0 #f2f5fa;"></div>
<span id="t39" style="left:865.19px;top:438.52px;font-family:'Liberation Sans';font-size:13.5px;line-height:13.5px;font-weight:normal;color:#ff0000;letter-spacing:-0.210px;white-space:pre;-webkit-text-stroke:0.4px #ff0000;">0.00</span>
<span id="t40" style="left:272.54px;top:476.95px;font-family:'Liberation Sans';font-size:11px;line-height:11px;font-weight:bold;color:#111;letter-spacing:0.157px;white-space:pre;">Orcado</span>
<span id="t41" style="left:384.84px;top:476.95px;font-family:'Liberation Sans';font-size:11px;line-height:11px;font-weight:bold;color:#111;letter-spacing:0.274px;white-space:pre;">Comprado Retroativo</span>
<span id="t42" style="left:527.94px;top:476.95px;font-family:'Liberation Sans';font-size:11px;line-height:11px;font-weight:bold;color:#111;letter-spacing:0.146px;white-space:pre;">Pago Retroativo</span>
<span id="t43" style="left:638.74px;top:476.95px;font-family:'Liberation Sans';font-size:11px;line-height:11px;font-weight:bold;color:#111;letter-spacing:0.313px;white-space:pre;">Comprado Sem Nota</span>
<span id="t44" style="left:762.14px;top:476.95px;font-family:'Liberation Sans';font-size:11px;line-height:11px;font-weight:bold;color:#111;letter-spacing:0.310px;white-space:pre;">Comprado Por Conta</span>
<span id="t45" style="left:155.14px;top:507.65px;font-family:'Liberation Sans';font-size:11px;line-height:11px;font-weight:bold;color:#111;letter-spacing:0.190px;white-space:pre;">Obras Civis:</span>
<div style="left:230px;top:495px;width:122px;height:20px;background:#fff;box-sizing:border-box;border:1px solid #c3d4ea;border-radius:2px;box-shadow:inset 1px 1px 0 #9c9c9c,1px 1px 0 #f2f5fa;"></div>
<span id="t46" style="left:328.34px;top:500.65px;font-family:'Liberation Sans';font-size:11px;line-height:11px;font-weight:bold;color:#000;letter-spacing:0.126px;white-space:pre;">0.00</span>
<div style="left:385px;top:495px;width:121px;height:20px;background:#fff;box-sizing:border-box;border:1px solid #c3d4ea;border-radius:2px;box-shadow:inset 1px 1px 0 #9c9c9c,1px 1px 0 #f2f5fa;"></div>
<span id="t47" style="left:482.34px;top:500.65px;font-family:'Liberation Sans';font-size:11px;line-height:11px;font-weight:bold;color:#000;letter-spacing:0.126px;white-space:pre;">0.00</span>
<div style="left:510px;top:495px;width:122px;height:20px;background:#fff;box-sizing:border-box;border:1px solid #c3d4ea;border-radius:2px;box-shadow:inset 1px 1px 0 #9c9c9c,1px 1px 0 #f2f5fa;"></div>
<span id="t48" style="left:608.34px;top:500.65px;font-family:'Liberation Sans';font-size:11px;line-height:11px;font-weight:bold;color:#000;letter-spacing:0.126px;white-space:pre;">0.00</span>
<div style="left:634px;top:495px;width:122px;height:20px;background:#fff;box-sizing:border-box;border:1px solid #c3d4ea;border-radius:2px;box-shadow:inset 1px 1px 0 #9c9c9c,1px 1px 0 #f2f5fa;"></div>
<span id="t49" style="left:732.34px;top:500.65px;font-family:'Liberation Sans';font-size:11px;line-height:11px;font-weight:bold;color:#000;letter-spacing:0.126px;white-space:pre;">0.00</span>
<div style="left:759px;top:495px;width:122px;height:20px;background:#d6d6d6;box-sizing:border-box;border:1px solid #c3d4ea;border-radius:2px;box-shadow:inset 1px 1px 0 #9c9c9c,1px 1px 0 #f2f5fa;"></div>
<span id="t50" style="left:857.34px;top:500.65px;font-family:'Liberation Sans';font-size:11px;line-height:11px;font-weight:bold;color:#1010ff;letter-spacing:0.126px;white-space:pre;">0.00</span>
<div style="left:358px;top:497px;width:24px;height:20px;background:#c3c3c3;box-sizing:border-box;border-top:1px solid #a4a4a4;border-left:1px solid #a4a4a4;border-right:1px solid #6d8fba;border-bottom:1px solid #6d8fba;border-radius:2px;"></div>
<span id="t51" style="left:365.74px;top:501.95px;font-family:'Liberation Sans';font-size:11px;line-height:11px;font-weight:normal;color:#000;letter-spacing:0.000px;white-space:pre;-webkit-text-stroke:0.2px #000;transform:scaleX(0.9430);transform-origin:0 0;">C</span>
<span id="t52" style="left:83.54px;top:529.65px;font-family:'Liberation Sans';font-size:11px;line-height:11px;font-weight:bold;color:#111;letter-spacing:0.257px;white-space:pre;">Montagens E Instalacoes:</span>
<div style="left:230px;top:518px;width:122px;height:20px;background:#fff;box-sizing:border-box;border:1px solid #c3d4ea;border-radius:2px;box-shadow:inset 1px 1px 0 #9c9c9c,1px 1px 0 #f2f5fa;"></div>
<span id="t53" style="left:328.34px;top:523.65px;font-family:'Liberation Sans';font-size:11px;line-height:11px;font-weight:bold;color:#000;letter-spacing:0.126px;white-space:pre;">0.00</span>
<div style="left:385px;top:518px;width:121px;height:20px;background:#fff;box-sizing:border-box;border:1px solid #c3d4ea;border-radius:2px;box-shadow:inset 1px 1px 0 #9c9c9c,1px 1px 0 #f2f5fa;"></div>
<span id="t54" style="left:482.34px;top:523.65px;font-family:'Liberation Sans';font-size:11px;line-height:11px;font-weight:bold;color:#000;letter-spacing:0.126px;white-space:pre;">0.00</span>
<div style="left:510px;top:518px;width:122px;height:20px;background:#fff;box-sizing:border-box;border:1px solid #c3d4ea;border-radius:2px;box-shadow:inset 1px 1px 0 #9c9c9c,1px 1px 0 #f2f5fa;"></div>
<span id="t55" style="left:608.34px;top:523.65px;font-family:'Liberation Sans';font-size:11px;line-height:11px;font-weight:bold;color:#000;letter-spacing:0.126px;white-space:pre;">0.00</span>
<div style="left:634px;top:518px;width:122px;height:20px;background:#fff;box-sizing:border-box;border:1px solid #c3d4ea;border-radius:2px;box-shadow:inset 1px 1px 0 #9c9c9c,1px 1px 0 #f2f5fa;"></div>
<span id="t56" style="left:732.34px;top:523.65px;font-family:'Liberation Sans';font-size:11px;line-height:11px;font-weight:bold;color:#000;letter-spacing:0.126px;white-space:pre;">0.00</span>
<div style="left:759px;top:518px;width:122px;height:20px;background:#d6d6d6;box-sizing:border-box;border:1px solid #c3d4ea;border-radius:2px;box-shadow:inset 1px 1px 0 #9c9c9c,1px 1px 0 #f2f5fa;"></div>
<span id="t57" style="left:857.34px;top:523.65px;font-family:'Liberation Sans';font-size:11px;line-height:11px;font-weight:bold;color:#1010ff;letter-spacing:0.126px;white-space:pre;">0.00</span>
<div style="left:358px;top:521px;width:24px;height:20px;background:#c3c3c3;box-sizing:border-box;border-top:1px solid #a4a4a4;border-left:1px solid #a4a4a4;border-right:1px solid #6d8fba;border-bottom:1px solid #6d8fba;border-radius:2px;"></div>
<span id="t58" style="left:365.74px;top:525.95px;font-family:'Liberation Sans';font-size:11px;line-height:11px;font-weight:normal;color:#000;letter-spacing:0.000px;white-space:pre;-webkit-text-stroke:0.2px #000;transform:scaleX(0.9430);transform-origin:0 0;">C</span>
<span id="t59" style="left:74.54px;top:551.65px;font-family:'Liberation Sans';font-size:11px;line-height:11px;font-weight:bold;color:#111;letter-spacing:0.168px;white-space:pre;">Maquinas E Equipamentos:</span>
<div style="left:230px;top:540px;width:122px;height:20px;background:#fff;box-sizing:border-box;border:1px solid #c3d4ea;border-radius:2px;box-shadow:inset 1px 1px 0 #9c9c9c,1px 1px 0 #f2f5fa;"></div>
<span id="t60" style="left:328.34px;top:545.65px;font-family:'Liberation Sans';font-size:11px;line-height:11px;font-weight:bold;color:#000;letter-spacing:0.126px;white-space:pre;">0.00</span>
<div style="left:385px;top:540px;width:121px;height:20px;background:#fff;box-sizing:border-box;border:1px solid #c3d4ea;border-radius:2px;box-shadow:inset 1px 1px 0 #9c9c9c,1px 1px 0 #f2f5fa;"></div>
<span id="t61" style="left:482.34px;top:545.65px;font-family:'Liberation Sans';font-size:11px;line-height:11px;font-weight:bold;color:#000;letter-spacing:0.126px;white-space:pre;">0.00</span>
<div style="left:510px;top:540px;width:122px;height:20px;background:#fff;box-sizing:border-box;border:1px solid #c3d4ea;border-radius:2px;box-shadow:inset 1px 1px 0 #9c9c9c,1px 1px 0 #f2f5fa;"></div>
<span id="t62" style="left:608.34px;top:545.65px;font-family:'Liberation Sans';font-size:11px;line-height:11px;font-weight:bold;color:#000;letter-spacing:0.126px;white-space:pre;">0.00</span>
<div style="left:634px;top:540px;width:122px;height:20px;background:#fff;box-sizing:border-box;border:1px solid #c3d4ea;border-radius:2px;box-shadow:inset 1px 1px 0 #9c9c9c,1px 1px 0 #f2f5fa;"></div>
<span id="t63" style="left:732.34px;top:545.65px;font-family:'Liberation Sans';font-size:11px;line-height:11px;font-weight:bold;color:#000;letter-spacing:0.126px;white-space:pre;">0.00</span>
<div style="left:759px;top:540px;width:122px;height:20px;background:#d6d6d6;box-sizing:border-box;border:1px solid #c3d4ea;border-radius:2px;box-shadow:inset 1px 1px 0 #9c9c9c,1px 1px 0 #f2f5fa;"></div>
<span id="t64" style="left:857.34px;top:545.65px;font-family:'Liberation Sans';font-size:11px;line-height:11px;font-weight:bold;color:#1010ff;letter-spacing:0.126px;white-space:pre;">0.00</span>
<div style="left:358px;top:544px;width:24px;height:19px;background:#c3c3c3;box-sizing:border-box;border-top:1px solid #a4a4a4;border-left:1px solid #a4a4a4;border-right:1px solid #6d8fba;border-bottom:1px solid #6d8fba;border-radius:2px;"></div>
<span id="t65" style="left:365.74px;top:548.95px;font-family:'Liberation Sans';font-size:11px;line-height:11px;font-weight:normal;color:#000;letter-spacing:0.000px;white-space:pre;-webkit-text-stroke:0.2px #000;transform:scaleX(0.9430);transform-origin:0 0;">C</span>
<span id="t66" style="left:111.94px;top:575.45px;font-family:'Liberation Sans';font-size:11px;line-height:11px;font-weight:bold;color:#111;letter-spacing:0.164px;white-space:pre;">Moveis E Utensilios:</span>
<div style="left:230px;top:563px;width:122px;height:20px;background:#fff;box-sizing:border-box;border:1px solid #c3d4ea;border-radius:2px;box-shadow:inset 1px 1px 0 #9c9c9c,1px 1px 0 #f2f5fa;"></div>
<span id="t67" style="left:328.34px;top:568.65px;font-family:'Liberation Sans';font-size:11px;line-height:11px;font-weight:bold;color:#000;letter-spacing:0.126px;white-space:pre;">0.00</span>
<div style="left:385px;top:563px;width:121px;height:20px;background:#fff;box-sizing:border-box;border:1px solid #c3d4ea;border-radius:2px;box-shadow:inset 1px 1px 0 #9c9c9c,1px 1px 0 #f2f5fa;"></div>
<span id="t68" style="left:482.34px;top:568.65px;font-family:'Liberation Sans';font-size:11px;line-height:11px;font-weight:bold;color:#000;letter-spacing:0.126px;white-space:pre;">0.00</span>
<div style="left:510px;top:563px;width:122px;height:20px;background:#fff;box-sizing:border-box;border:1px solid #c3d4ea;border-radius:2px;box-shadow:inset 1px 1px 0 #9c9c9c,1px 1px 0 #f2f5fa;"></div>
<span id="t69" style="left:608.34px;top:568.65px;font-family:'Liberation Sans';font-size:11px;line-height:11px;font-weight:bold;color:#000;letter-spacing:0.126px;white-space:pre;">0.00</span>
<div style="left:634px;top:563px;width:122px;height:20px;background:#fff;box-sizing:border-box;border:1px solid #c3d4ea;border-radius:2px;box-shadow:inset 1px 1px 0 #9c9c9c,1px 1px 0 #f2f5fa;"></div>
<span id="t70" style="left:732.34px;top:568.65px;font-family:'Liberation Sans';font-size:11px;line-height:11px;font-weight:bold;color:#000;letter-spacing:0.126px;white-space:pre;">0.00</span>
<div style="left:759px;top:563px;width:122px;height:20px;background:#d6d6d6;box-sizing:border-box;border:1px solid #c3d4ea;border-radius:2px;box-shadow:inset 1px 1px 0 #9c9c9c,1px 1px 0 #f2f5fa;"></div>
<span id="t71" style="left:857.34px;top:568.65px;font-family:'Liberation Sans';font-size:11px;line-height:11px;font-weight:bold;color:#1010ff;letter-spacing:0.126px;white-space:pre;">0.00</span>
<div style="left:358px;top:567px;width:24px;height:19px;background:#c3c3c3;box-sizing:border-box;border-top:1px solid #a4a4a4;border-left:1px solid #a4a4a4;border-right:1px solid #6d8fba;border-bottom:1px solid #6d8fba;border-radius:2px;"></div>
<span id="t72" style="left:365.74px;top:571.95px;font-family:'Liberation Sans';font-size:11px;line-height:11px;font-weight:normal;color:#000;letter-spacing:0.000px;white-space:pre;-webkit-text-stroke:0.2px #000;transform:scaleX(0.9430);transform-origin:0 0;">C</span>
<span id="t73" style="left:172.54px;top:595.65px;font-family:'Liberation Sans';font-size:11px;line-height:11px;font-weight:bold;color:#111;letter-spacing:0.463px;white-space:pre;">Veiculos:</span>
<div style="left:230px;top:586px;width:122px;height:20px;background:#fff;box-sizing:border-box;border:1px solid #c3d4ea;border-radius:2px;box-shadow:inset 1px 1px 0 #9c9c9c,1px 1px 0 #f2f5fa;"></div>
<span id="t74" style="left:328.34px;top:591.65px;font-family:'Liberation Sans';font-size:11px;line-height:11px;font-weight:bold;color:#000;letter-spacing:0.126px;white-space:pre;">0.00</span>
<div style="left:385px;top:586px;width:121px;height:20px;background:#fff;box-sizing:border-box;border:1px solid #c3d4ea;border-radius:2px;box-shadow:inset 1px 1px 0 #9c9c9c,1px 1px 0 #f2f5fa;"></div>
<span id="t75" style="left:482.34px;top:591.65px;font-family:'Liberation Sans';font-size:11px;line-height:11px;font-weight:bold;color:#000;letter-spacing:0.126px;white-space:pre;">0.00</span>
<div style="left:510px;top:586px;width:122px;height:20px;background:#fff;box-sizing:border-box;border:1px solid #c3d4ea;border-radius:2px;box-shadow:inset 1px 1px 0 #9c9c9c,1px 1px 0 #f2f5fa;"></div>
<span id="t76" style="left:608.34px;top:591.65px;font-family:'Liberation Sans';font-size:11px;line-height:11px;font-weight:bold;color:#000;letter-spacing:0.126px;white-space:pre;">0.00</span>
<div style="left:634px;top:586px;width:122px;height:20px;background:#fff;box-sizing:border-box;border:1px solid #c3d4ea;border-radius:2px;box-shadow:inset 1px 1px 0 #9c9c9c,1px 1px 0 #f2f5fa;"></div>
<span id="t77" style="left:732.34px;top:591.65px;font-family:'Liberation Sans';font-size:11px;line-height:11px;font-weight:bold;color:#000;letter-spacing:0.126px;white-space:pre;">0.00</span>
<div style="left:759px;top:586px;width:122px;height:20px;background:#d6d6d6;box-sizing:border-box;border:1px solid #c3d4ea;border-radius:2px;box-shadow:inset 1px 1px 0 #9c9c9c,1px 1px 0 #f2f5fa;"></div>
<span id="t78" style="left:857.34px;top:591.65px;font-family:'Liberation Sans';font-size:11px;line-height:11px;font-weight:bold;color:#1010ff;letter-spacing:0.126px;white-space:pre;">0.00</span>
<div style="left:358px;top:589px;width:24px;height:18px;background:#c3c3c3;box-sizing:border-box;border-top:1px solid #a4a4a4;border-left:1px solid #a4a4a4;border-right:1px solid #6d8fba;border-bottom:1px solid #6d8fba;border-radius:2px;"></div>
<span id="t79" style="left:365.74px;top:593.95px;font-family:'Liberation Sans';font-size:11px;line-height:11px;font-weight:normal;color:#000;letter-spacing:0.000px;white-space:pre;-webkit-text-stroke:0.2px #000;transform:scaleX(0.9430);transform-origin:0 0;">C</span>
<span id="t80" style="left:180.14px;top:620.65px;font-family:'Liberation Sans';font-size:11px;line-height:11px;font-weight:bold;color:#111;letter-spacing:0.361px;white-space:pre;">Outros:</span>
<div style="left:230px;top:608px;width:122px;height:20px;background:#fff;box-sizing:border-box;border:1px solid #c3d4ea;border-radius:2px;box-shadow:inset 1px 1px 0 #9c9c9c,1px 1px 0 #f2f5fa;"></div>
<span id="t81" style="left:328.34px;top:613.65px;font-family:'Liberation Sans';font-size:11px;line-height:11px;font-weight:bold;color:#000;letter-spacing:0.126px;white-space:pre;">0.00</span>
<div style="left:385px;top:608px;width:121px;height:20px;background:#fff;box-sizing:border-box;border:1px solid #c3d4ea;border-radius:2px;box-shadow:inset 1px 1px 0 #9c9c9c,1px 1px 0 #f2f5fa;"></div>
<span id="t82" style="left:482.34px;top:613.65px;font-family:'Liberation Sans';font-size:11px;line-height:11px;font-weight:bold;color:#000;letter-spacing:0.126px;white-space:pre;">0.00</span>
<div style="left:510px;top:608px;width:122px;height:20px;background:#fff;box-sizing:border-box;border:1px solid #c3d4ea;border-radius:2px;box-shadow:inset 1px 1px 0 #9c9c9c,1px 1px 0 #f2f5fa;"></div>
<span id="t83" style="left:608.34px;top:613.65px;font-family:'Liberation Sans';font-size:11px;line-height:11px;font-weight:bold;color:#000;letter-spacing:0.126px;white-space:pre;">0.00</span>
<div style="left:634px;top:608px;width:122px;height:20px;background:#fff;box-sizing:border-box;border:1px solid #c3d4ea;border-radius:2px;box-shadow:inset 1px 1px 0 #9c9c9c,1px 1px 0 #f2f5fa;"></div>
<span id="t84" style="left:732.34px;top:613.65px;font-family:'Liberation Sans';font-size:11px;line-height:11px;font-weight:bold;color:#000;letter-spacing:0.126px;white-space:pre;">0.00</span>
<div style="left:759px;top:608px;width:122px;height:20px;background:#d6d6d6;box-sizing:border-box;border:1px solid #c3d4ea;border-radius:2px;box-shadow:inset 1px 1px 0 #9c9c9c,1px 1px 0 #f2f5fa;"></div>
<span id="t85" style="left:857.34px;top:613.65px;font-family:'Liberation Sans';font-size:11px;line-height:11px;font-weight:bold;color:#1010ff;letter-spacing:0.126px;white-space:pre;">0.00</span>
<div style="left:358px;top:609px;width:24px;height:20px;background:#c3c3c3;box-sizing:border-box;border-top:1px solid #a4a4a4;border-left:1px solid #a4a4a4;border-right:1px solid #6d8fba;border-bottom:1px solid #6d8fba;border-radius:2px;"></div>
<span id="t86" style="left:365.74px;top:613.95px;font-family:'Liberation Sans';font-size:11px;line-height:11px;font-weight:normal;color:#000;letter-spacing:0.000px;white-space:pre;-webkit-text-stroke:0.2px #000;transform:scaleX(0.9430);transform-origin:0 0;">C</span>
<span id="t87" style="left:185.16px;top:640.10px;font-family:'Liberation Sans';font-size:14px;line-height:14px;font-weight:normal;color:#ff0000;letter-spacing:0.706px;white-space:pre;-webkit-text-stroke:0.35px #ff0000;">Total:</span>
<div style="left:230px;top:631px;width:122px;height:20px;background:#fff;box-sizing:border-box;border:1px solid #c3d4ea;border-radius:2px;box-shadow:inset 1px 1px 0 #9c9c9c,1px 1px 0 #f2f5fa;"></div>
<span id="t88" style="left:324.19px;top:635.52px;font-family:'Liberation Sans';font-size:13.5px;line-height:13.5px;font-weight:normal;color:#ff0000;letter-spacing:0.000px;white-space:pre;-webkit-text-stroke:0.4px #ff0000;transform:scaleX(0.9646);transform-origin:0 0;">0.00</span>
<div style="left:385px;top:631px;width:121px;height:20px;background:#fff;box-sizing:border-box;border:1px solid #c3d4ea;border-radius:2px;box-shadow:inset 1px 1px 0 #9c9c9c,1px 1px 0 #f2f5fa;"></div>
<span id="t89" style="left:478.19px;top:635.52px;font-family:'Liberation Sans';font-size:13.5px;line-height:13.5px;font-weight:normal;color:#ff0000;letter-spacing:0.000px;white-space:pre;-webkit-text-stroke:0.4px #ff0000;transform:scaleX(0.9646);transform-origin:0 0;">0.00</span>
<div style="left:510px;top:631px;width:122px;height:20px;background:#fff;box-sizing:border-box;border:1px solid #c3d4ea;border-radius:2px;box-shadow:inset 1px 1px 0 #9c9c9c,1px 1px 0 #f2f5fa;"></div>
<span id="t90" style="left:604.19px;top:635.52px;font-family:'Liberation Sans';font-size:13.5px;line-height:13.5px;font-weight:normal;color:#ff0000;letter-spacing:0.000px;white-space:pre;-webkit-text-stroke:0.4px #ff0000;transform:scaleX(0.9646);transform-origin:0 0;">0.00</span>
<div style="left:634px;top:631px;width:122px;height:20px;background:#fff;box-sizing:border-box;border:1px solid #c3d4ea;border-radius:2px;box-shadow:inset 1px 1px 0 #9c9c9c,1px 1px 0 #f2f5fa;"></div>
<span id="t91" style="left:728.19px;top:635.52px;font-family:'Liberation Sans';font-size:13.5px;line-height:13.5px;font-weight:normal;color:#ff0000;letter-spacing:0.000px;white-space:pre;-webkit-text-stroke:0.4px #ff0000;transform:scaleX(0.9646);transform-origin:0 0;">0.00</span></body></html>
